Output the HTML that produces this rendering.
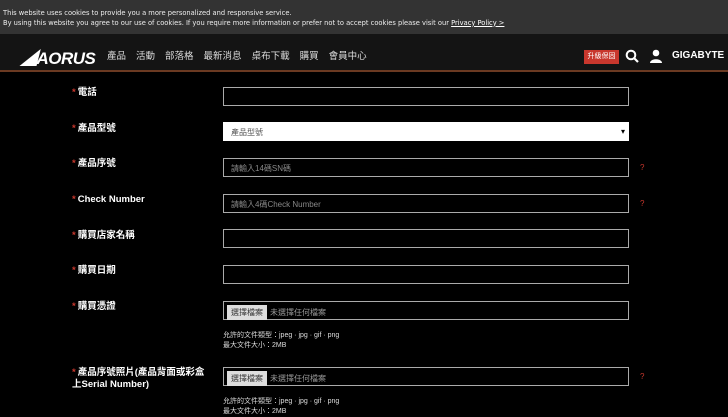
<!DOCTYPE html>
<html><head><meta charset="utf-8"><style>
*{margin:0;padding:0;box-sizing:border-box}
body{width:728px;height:409px;overflow:hidden;background:#000;font-family:"Liberation Sans","Noto Sans CJK TC",sans-serif;color:#fff;position:relative}
.cookie{position:absolute;left:0;top:0;width:728px;height:34px;background:#333;font-size:6.7px;color:#eee;padding:9px 0 0 3px;line-height:9.5px;font-family:"DejaVu Sans","Noto Sans CJK TC",sans-serif}
.cookie u{color:#fff}
.nav{position:absolute;left:0;top:34px;width:728px;height:38px;background:#141414;border-bottom:2px solid #6b3a22}
.logo{position:absolute;left:20px;top:10px;font-style:italic;font-weight:bold;font-size:17px;letter-spacing:-0.5px}
.menu{position:absolute;left:107px;top:14px;font-size:9.5px;color:#ddd}
.menu span{margin-right:10px}
.btn{position:absolute;left:584px;top:16px;width:35px;height:14px;background:#c8372d;font-size:7px;text-align:center;line-height:14px}
.gb{position:absolute;left:672px;top:16px;font-size:10px;font-weight:bold}
.lbl{position:absolute;left:72px;font-size:9.5px;font-weight:bold;line-height:12px}
.lbl i{color:#c8372d;font-style:normal;margin-right:2px}
.in{position:absolute;left:223px;width:406px;height:19px;border:1px solid #aaa;background:#000;font-size:8px;color:#888;padding:4px 7px}
.sel{background:#fff;border-color:#fff;color:#555}
.q{position:absolute;left:640px;font-size:8px;color:#c8372d}
.file{padding:3px 3px;color:#999}
.file b{display:inline-block;background:#ddd;color:#333;font-weight:normal;padding:2px 4px;margin-right:3px}
.hint{position:absolute;left:223px;font-size:7px;color:#ddd;line-height:10px}
</style></head><body>
<div class="cookie">This website uses cookies to provide you a more personalized and responsive service.<br>By using this website you agree to our use of cookies. If you require more information or prefer not to accept cookies please visit our <u>Privacy Policy &gt;</u></div>
<div class="nav">
<div class="logo">◢AORUS</div>
<div class="menu"><span>產品</span><span>活動</span><span>部落格</span><span>最新消息</span><span>桌布下載</span><span>購買</span><span>會員中心</span></div>
<div class="btn">升級保固</div>
<svg style="position:absolute;left:625px;top:15px" width="14" height="14" viewBox="0 0 14 14"><circle cx="6" cy="6" r="4.3" fill="none" stroke="#fff" stroke-width="2"/><path d="M9 9l4 4" stroke="#fff" stroke-width="2.2"/></svg>
<svg style="position:absolute;left:649px;top:15px" width="14" height="14" viewBox="0 0 14 14"><circle cx="7" cy="4" r="3.3" fill="#fff"/><path d="M1 14c0-5 12-5 12 0z" fill="#fff"/></svg>
<div class="gb">GIGABYTE</div>
</div>
<div class="lbl" style="top:87px"><i>*</i>電話</div>
<div class="in" style="top:87px"></div>
<div class="lbl" style="top:123px"><i>*</i>產品型號</div>
<div class="in sel" style="top:122px">產品型號<span style="position:absolute;right:3px;color:#000">▾</span></div>
<div class="lbl" style="top:158px"><i>*</i>產品序號</div>
<div class="in" style="top:158px">請輸入14碼SN碼</div><div class="q" style="top:163px">?</div>
<div class="lbl" style="top:194px"><i>*</i>Check Number</div>
<div class="in" style="top:194px">請輸入4碼Check Number</div><div class="q" style="top:199px">?</div>
<div class="lbl" style="top:230px"><i>*</i>購買店家名稱</div>
<div class="in" style="top:229px"></div>
<div class="lbl" style="top:265px"><i>*</i>購買日期</div>
<div class="in" style="top:265px"></div>
<div class="lbl" style="top:301px"><i>*</i>購買憑證</div>
<div class="in file" style="top:301px"><b>選擇檔案</b>未選擇任何檔案</div>
<div class="hint" style="top:331px">允許的文件類型：jpeg · jpg · gif · png<br>最大文件大小：2MB</div>
<div class="lbl" style="top:367px"><i>*</i>產品序號照片(產品背面或彩盒<br>上Serial Number)</div>
<div class="in file" style="top:367px"><b>選擇檔案</b>未選擇任何檔案</div><div class="q" style="top:372px">?</div>
<div class="hint" style="top:397px">允許的文件類型：jpeg · jpg · gif · png<br>最大文件大小：2MB</div>
</body></html>
